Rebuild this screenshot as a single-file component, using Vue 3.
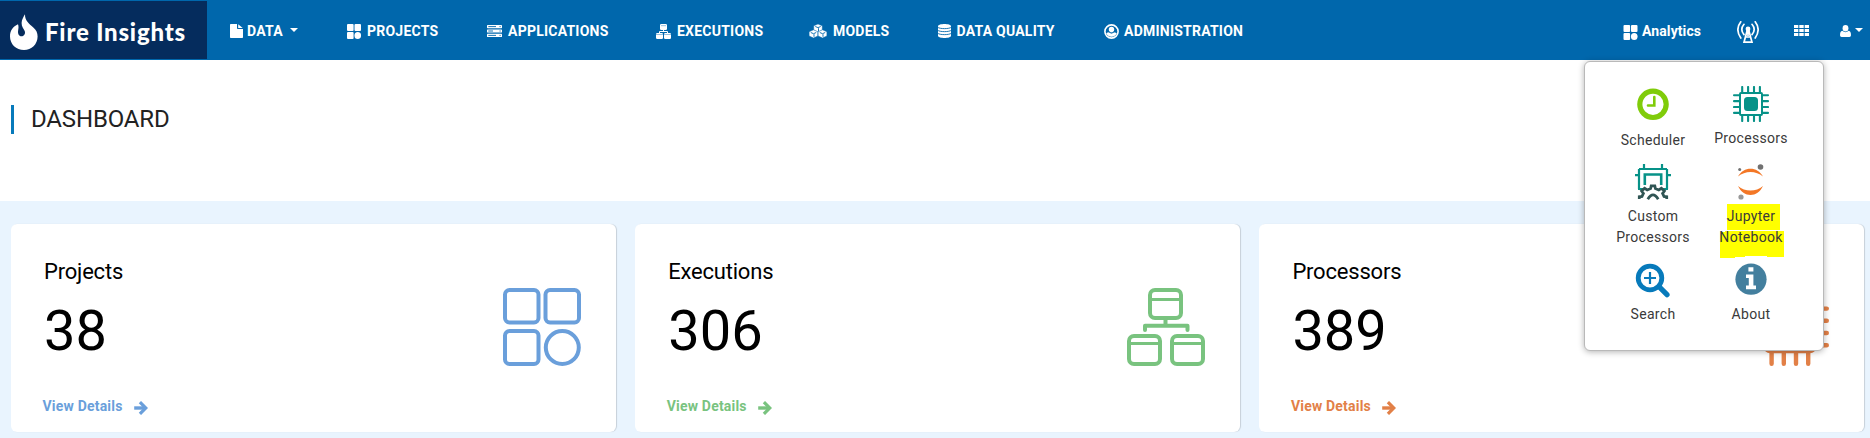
<script setup>
const menu = [
  { label: 'DATA', icon: 'file', caret: true },
  { label: 'PROJECTS', icon: 'tiles' },
  { label: 'APPLICATIONS', icon: 'server' },
  { label: 'EXECUTIONS', icon: 'tree' },
  { label: 'MODELS', icon: 'cubes' },
  { label: 'DATA QUALITY', icon: 'database' },
  { label: 'ADMINISTRATION', icon: 'admin' },
]
const cards = [
  { title: 'Projects', value: 38, tone: 'blue' },
  { title: 'Executions', value: 306, tone: 'green' },
  { title: 'Processors', value: 389, tone: 'orange' },
]
const pins = [-18.4, -6.2, 6, 18.2]
const miniPins = [9.2, 15.1, 21, 26.9]
</script>

<template>
  <div class="page">
    <header class="topbar">
      <div class="brand">
        <svg class="flame" width="28" height="37" viewBox="10 14 28 37">
          <path fill="#fff" d="M25 14.200C24.800 20.500 29 23.500 33.300 27.500C36.300 30 37.600 33 37.600 36.400C37.600 44 31.500 50 24 50C16.200 50 10 44 10 36.400C10 30.500 13 26.400 18 24.300C18.800 26.400 18.500 28 18.200 30C17.500 33.500 18.800 36.300 21.500 36.300C24.200 36.300 25.700 33.600 24.700 31C23.600 28.500 21.500 26.500 21.600 23C21.700 19.500 23.400 17 25 14.200Z" />
        </svg>
        <span class="brand-name">Fire Insights</span>
      </div>
      <nav class="menu">
        <a v-for="m in menu" :key="m.label" class="menu-item" :class="m.icon">
          <svg v-if="m.icon === 'file'" class="mi" width="13" height="14" viewBox="0 0 13 14" fill="#fff">
            <path d="M.8 0H7v4.200q0 .8.800.8H13v8.200q0 .8-.8.800H.8q-.8 0-.8-.8V.8Q0 0 .8 0Z" /><path d="M8.200 0.200 12.700 4H8.200Z" />
          </svg>
          <svg v-else-if="m.icon === 'tiles'" class="mi" width="14" height="15" viewBox="0 0 14 15" fill="#fff">
            <rect width="6.600" height="7" rx="1" /><rect x="7.500" width="6.500" height="7" rx="1" /><rect y="8" width="6.600" height="7" rx="1" /><ellipse cx="10.750" cy="11.500" rx="3.300" ry="3.500" />
          </svg>
          <svg v-else-if="m.icon === 'server'" class="mi" width="15" height="12" viewBox="0 0 15 12">
            <rect width="15" height="3.200" rx=".6" fill="#fff" /><rect y="4.400" width="15" height="3.200" rx=".6" fill="#fff" /><rect y="8.800" width="15" height="3.200" rx=".6" fill="#fff" />
            <path stroke="#0067ac" stroke-width=".9" d="M1.300 1.600H9M1.300 6H6M1.300 10.400H9M12.500 1.600h1.200M12.500 6h1.200M12.500 10.400h1.200" />
          </svg>
          <svg v-else-if="m.icon === 'tree'" class="mi" width="15" height="15" viewBox="0 0 15 15">
            <g fill="#fff"><rect x="4" width="7" height="6" rx="1.300" /><rect y="9" width="7" height="6" rx="1.200" /><rect x="8" y="9" width="7" height="6" rx="1.200" /></g>
            <path d="M7.500 6v1.600M3.500 9V7.500h8V9" fill="none" stroke="#fff" /><path d="M5 1.700h5M0 10.500h7M8 10.500h7" stroke="#79b0d6" stroke-width=".8" />
          </svg>
          <svg v-else-if="m.icon === 'cubes'" class="mi" width="18" height="14" viewBox="0 0 18 14">
            <g fill="#fff" stroke="#0067ac" stroke-width=".5"><path d="M9 0l4.300 1.800v4.500L9 8.300 4.700 6.300V1.800Z" /><path d="M4.500 5.800l4.400 1.900v4.300l-4.400 2-4.400-2V7.700Z" /><path d="M13.500 5.800l4.400 1.900v4.300l-4.400 2-4.400-2V7.700Z" /></g>
            <path d="M6.300 2.500 9 3.600l2.700-1.100M9.500 4.200v3M1.800 8.500l2.700 1.200 2.700-1.200M5 10.200v2.600M10.800 8.500l2.700 1.200 2.700-1.200M14 10.200v2.600" fill="none" stroke="#0067ac" stroke-width=".9" />
          </svg>
          <svg v-else-if="m.icon === 'database'" class="mi" width="13" height="14" viewBox="0 0 13 14">
            <path fill="#fff" d="M0 2.300C0-.7 13-.7 13 2.300V11.700C13 14.700 0 14.700 0 11.700Z" />
            <path d="M-.3 3.200C1.500 5.100 11.500 5.100 13.300 3.200M-.3 6.200C1.500 8.100 11.500 8.100 13.300 6.200M-.3 9.200C1.500 11.100 11.500 11.100 13.300 9.200" fill="none" stroke="#0067ac" stroke-width=".9" />
          </svg>
          <svg v-else class="mi" width="15" height="15" viewBox="0 0 15 15">
            <circle cx="7.500" cy="7.500" r="6.600" fill="none" stroke="#fff" stroke-width="1.600" /><circle cx="7.500" cy="5.500" r="2.700" fill="#fff" />
            <path fill="#fff" d="M2.200 9.200Q4.500 8 5.300 8q2.200 1.500 4.400 0 1.300.2 3.100 1.200A5.800 5.800 0 0 1 2.200 9.200Z" />
            <path d="M4.300 7.800q3.200 2.900 6.400 0" fill="none" stroke="#0067ac" stroke-width=".9" />
          </svg>
          <span>{{ m.label }}</span>
          <i v-if="m.caret" class="caret"></i>
        </a>
      </nav>
      <div class="tools">
        <svg width="15" height="15" viewBox="0 0 14 15" fill="#fff" class="t-tiles">
          <rect width="6.600" height="7" rx="1" /><rect x="7.500" width="6.500" height="7" rx="1" /><rect y="8" width="6.600" height="7" rx="1" /><ellipse cx="10.750" cy="11.500" rx="3.300" ry="3.500" />
        </svg>
        <span class="analytics">Analytics</span>
        <svg class="antenna" width="22" height="22" viewBox="0 0 22 22" fill="none" stroke="#fff" stroke-width="1.700">
          <path d="M3.800.8Q-2.100 8.500 3.800 17M18.200.8Q24.100 8.500 18.200 17M7 3.300Q2.600 8.500 7 13.600M15 3.300Q19.400 8.500 15 13.600" stroke-linecap="round" />
          <circle cx="11" cy="8" r="2.400" fill="#fff" stroke="none" /><path d="M10.300 9 7 21.200H15L11.700 9ZM11 8v7M8.500 16h5" />
        </svg>
        <svg class="apps" width="15" height="11" viewBox="0 0 15 11" fill="#fff">
          <path d="M0 0h4.300v3H0zM5.300 0h4.400v3H5.300zM10.700 0H15v3h-4.300zM0 4h4.300v3H0zM5.300 4h4.400v3H5.300zM10.700 4H15v3h-4.300zM0 8h4.300v3H0zM5.300 8h4.400v3H5.300zM10.700 8H15v3h-4.300z" />
        </svg>
        <svg class="user" width="11" height="12" viewBox="0 0 11 12" fill="#fff">
          <ellipse cx="5.500" cy="3.200" rx="2.900" ry="3.200" /><path d="M2.300 5.800Q5.500 8.500 8.700 5.800 11 6.200 11 10.200 11 12 9.400 12H1.600Q0 12 0 10.200 0 6.200 2.300 5.800Z" />
        </svg>
        <i class="caret user-caret"></i>
      </div>
    </header>

    <section class="heading"><h1>DASHBOARD</h1></section>

    <main class="cards">
      <article v-for="c in cards" :key="c.title" class="card" :class="c.tone">
        <div class="info">
          <h2>{{ c.title }}</h2>
          <div class="value">{{ c.value }}</div>
          <a class="details">View Details
            <svg width="14" height="14" viewBox="0 0 14 14" fill="none" stroke="currentColor"><path d="M.2 7H11" stroke-width="3.400" /><path d="M5.900 1.100 11.800 7 5.900 12.900" stroke-width="3.200" /></svg>
          </a>
        </div>
        <svg v-if="c.tone === 'blue'" class="pic" width="78" height="78" viewBox="0 0 78 78" fill="none" stroke="currentColor" stroke-width="4">
          <rect x="2" y="2" width="33.500" height="32.500" rx="4.500" /><rect x="42.500" y="2" width="33.500" height="32.500" rx="4.500" /><rect x="2" y="43" width="33.500" height="33" rx="4.500" /><circle cx="59.300" cy="59.500" r="16.500" />
        </svg>
        <svg v-else-if="c.tone === 'green'" class="pic" width="78" height="78" viewBox="0 0 78 78" fill="none" stroke="currentColor" stroke-width="4">
          <rect x="23" y="2" width="31" height="28" rx="5" /><rect x="2" y="48" width="31" height="28" rx="5" /><rect x="45" y="48" width="31" height="28" rx="5" />
          <path d="M23 11.500h31M2 55.500h31M45 55.500h31" stroke-width="3" /><path d="M38.500 30v7.500M18 42V37.700H60.500V42" stroke-linecap="round" stroke-linejoin="round" />
        </svg>
        <svg v-else class="pic chip" width="78" height="78" viewBox="-39 -39 78 78" fill="none" stroke="currentColor" stroke-width="4.400" stroke-linecap="round">
          <rect x="-24" y="-24" width="48" height="48" rx="4" /><rect x="-14" y="-14" width="28" height="28" rx="4" fill="currentColor" />
          <path v-for="p in pins" :key="p" :d="`M${p} -36.800V-26M${p} 36.800V26M-36.800 ${p}H-26M36.800 ${p}H26`" />
        </svg>
      </article>
    </main>

    <aside class="popover">
      <a class="app scheduler">
        <svg width="36" height="36" viewBox="0 0 36 36" fill="none" stroke="#80cc0a">
          <circle cx="18" cy="18.300" r="13.200" stroke-width="5.200" /><path d="M19.300 11V19.500H13" stroke-width="2.600" stroke-linecap="round" />
        </svg>
        <span>Scheduler</span>
      </a>
      <a class="app">
        <svg width="36" height="36" viewBox="0 0 36 36" fill="none" stroke="#079288" stroke-width="2">
          <rect x="7" y="7" width="22" height="22" rx="1" /><rect x="12" y="12" width="12" height="12" rx="2.500" fill="#079288" />
          <path v-for="p in miniPins" :key="p" :d="`M${p} 1V7M${p} 29V35M1 ${p}H7M29 ${p}H35`" stroke-width="2.100" stroke-linecap="round" />
        </svg>
        <span>Processors</span>
      </a>
      <a class="app">
        <svg width="36" height="36" viewBox="0 0 36 36" fill="none" stroke="#079288" stroke-width="2.200">
          <path d="M3 25H8M4 25V5M4 5H32M32 5V25M28 25H33M9 0V5M27 0V5M0 11.200H4M32 11.200H36" /><path d="M9.800 21V10.500H26.200V21" stroke-width="2.600" />
          <path d="M4.300 35V32.800L7 32.400 8.400 29.500 6.600 27 9.600 24.300 12.200 26 15.600 24.600 16.200 21.800H19.800L20.400 24.600 23.800 26 26.400 24.300 29.400 27 27.600 29.500 29 32.400 31.700 32.800V35M12.800 35.300Q18 26.500 23.200 35.300" stroke="#305554" stroke-width="2.800" />
        </svg>
        <span>Custom<br>Processors</span>
      </a>
      <a class="app jupyter">
        <svg width="36" height="36" viewBox="0 0 36 36">
          <path d="M5 12.500C10.500 2 24.500 2 30 12.500 23 6.400 12 6.400 5 12.500ZM5 22C12 28 23 28 30 22 24.500 34 10.500 34 5 22Z" fill="#f37726" />
          <circle cx="27.500" cy="3" r="2.800" fill="#717171" /><circle cx="6.700" cy="5.600" r="1.500" fill="#717171" /><circle cx="8" cy="33" r="2.600" fill="#989898" />
        </svg>
        <svg class="marker" width="64" height="54" viewBox="0 0 64 54"><path fill="#ff0" d="M7 0H60V26H7ZM0 28H5V27H64V53H47V52H25V53H15V54H0Z" /></svg>
        <span>Jupyter<br>Notebook</span>
      </a>
      <a class="app">
        <svg width="36" height="36" viewBox="0 0 36 36" fill="none" stroke="#077abb">
          <circle cx="15" cy="16" r="11.800" stroke-width="4.800" /><path d="M24.500 25.200 32 32.700" stroke-width="5.200" stroke-linecap="round" /><path d="M9 16H21M15 10V22" stroke-width="2.200" />
        </svg>
        <span>Search</span>
      </a>
      <a class="app">
        <svg width="36" height="36" viewBox="0 0 36 36">
          <circle cx="18" cy="17.200" r="15.600" fill="#437f9e" /><path fill="#fff" d="M15.400 5.200H20.400V9.600H15.400ZM13 12.500H20.400V23.500H23V27.200H13V23.500H15.800V16.100H13Z" />
        </svg>
        <span>About</span>
      </a>
    </aside>
  </div>
</template>

<style>
body { margin: 0; overflow: hidden; }
</style>

<style scoped>
.page { position: relative; width: 1870px; height: 438px; background: #e9f4fe; font-family: Roboto, "Liberation Sans", sans-serif; overflow: hidden; }
svg { display: block; flex: none; }
.topbar { display: flex; align-items: center; height: 60px; background: #0067ac; color: #fff; font-size: 14px; font-weight: 700; }
.brand { display: flex; width: 207px; height: 58px; box-sizing: border-box; padding: 13px 0 0 10px; background: #052c5d; }
.brand-name { margin: 3px 0 0 7px; font: 900 24px/30px Lato, sans-serif; letter-spacing: .8px; white-space: nowrap; }
.menu { display: grid; grid-template-columns: 117px 140px 169px 153px 129px 166px 160px; margin-left: 23px; }
.menu-item { display: flex; align-items: center; height: 20px; line-height: 20px; white-space: nowrap; padding-top: 2px; letter-spacing: .23px; }
.menu-item .mi { margin-right: 6px; }
.menu-item.file .mi { margin-right: 4px; }
.menu-item.database .mi { margin-right: 5.500px; }
.menu-item.admin .mi { margin-right: 5px; }
.caret { width: 0; height: 0; border: 4.500px solid transparent; border-top-color: #fff; border-bottom: 0; margin: -3px 0 0 7px; }
.tools { display: flex; align-items: center; margin-left: auto; padding-right: 7px; }
.t-tiles { margin-top: 4px; }
.analytics { margin: 2px 36px 0 4px; width: 59px; white-space: nowrap; letter-spacing: .1px; }
.antenna { margin: 4px 35px 0 0; }
.apps { margin-right: 31px; margin-top: 1px; }
.user { margin-top: 2px; }
.user-caret { margin: 0 0 0 4px; }
.heading { height: 141px; box-sizing: border-box; padding: 45px 0 0 11px; background: #fff; }
h1 { margin: 0; height: 29px; line-height: 29px; border-left: 3px solid #077abb; padding-left: 17px; font-size: 24px; font-weight: 400; letter-spacing: -.15px; color: #222; }
.cards { display: grid; grid-template-columns: repeat(3, 604.500px); gap: 19.700px; padding: 23px 0 0 11px; }
.card { display: flex; justify-content: space-between; height: 208px; background: #fff; border-radius: 6px; box-shadow: 1px 0 1px rgba(0, 0, 0, .15); }
.blue { color: #6a9fdb; }
.green { color: #79c37f; }
.orange { color: #e28047; }
.info { padding-left: 32px; }
h2 { margin: 33px 0 0 1px; font-size: 22px; line-height: 30px; font-weight: 400; letter-spacing: -.2px; color: #000; }
.value { margin: 11px 0 0 1px; font-size: 56px; line-height: 66px; font-weight: 400; color: #000; }
.details { display: flex; align-items: center; gap: 11px; margin: 32px 0 0 -.5px; font-size: 14px; line-height: 20px; font-weight: 700; letter-spacing: .2px; }
.details svg { margin-top: 3px; }
.pic { margin: 64px 35px 0 0; }
.popover { position: absolute; left: 1584px; top: 61px; width: 240px; height: 290px; box-sizing: border-box; border: 1px solid #b9b9b9; border-radius: 6px; background: #fff; box-shadow: 0 1px 6px rgba(0, 0, 0, .3); padding: 24px 0 0 19px; display: grid; grid-template-columns: 98px 98px; grid-template-rows: 78px 98px 64px; align-content: start; }
.app { position: relative; display: flex; flex-direction: column; align-items: center; gap: 6px; font-size: 14px; font-weight: 400; line-height: 21px; letter-spacing: .3px; text-align: center; color: #3a3a3a; }
.scheduler { gap: 8px; }
.app span { position: relative; }
.marker { position: absolute; left: 18px; top: 40px; }
</style>
